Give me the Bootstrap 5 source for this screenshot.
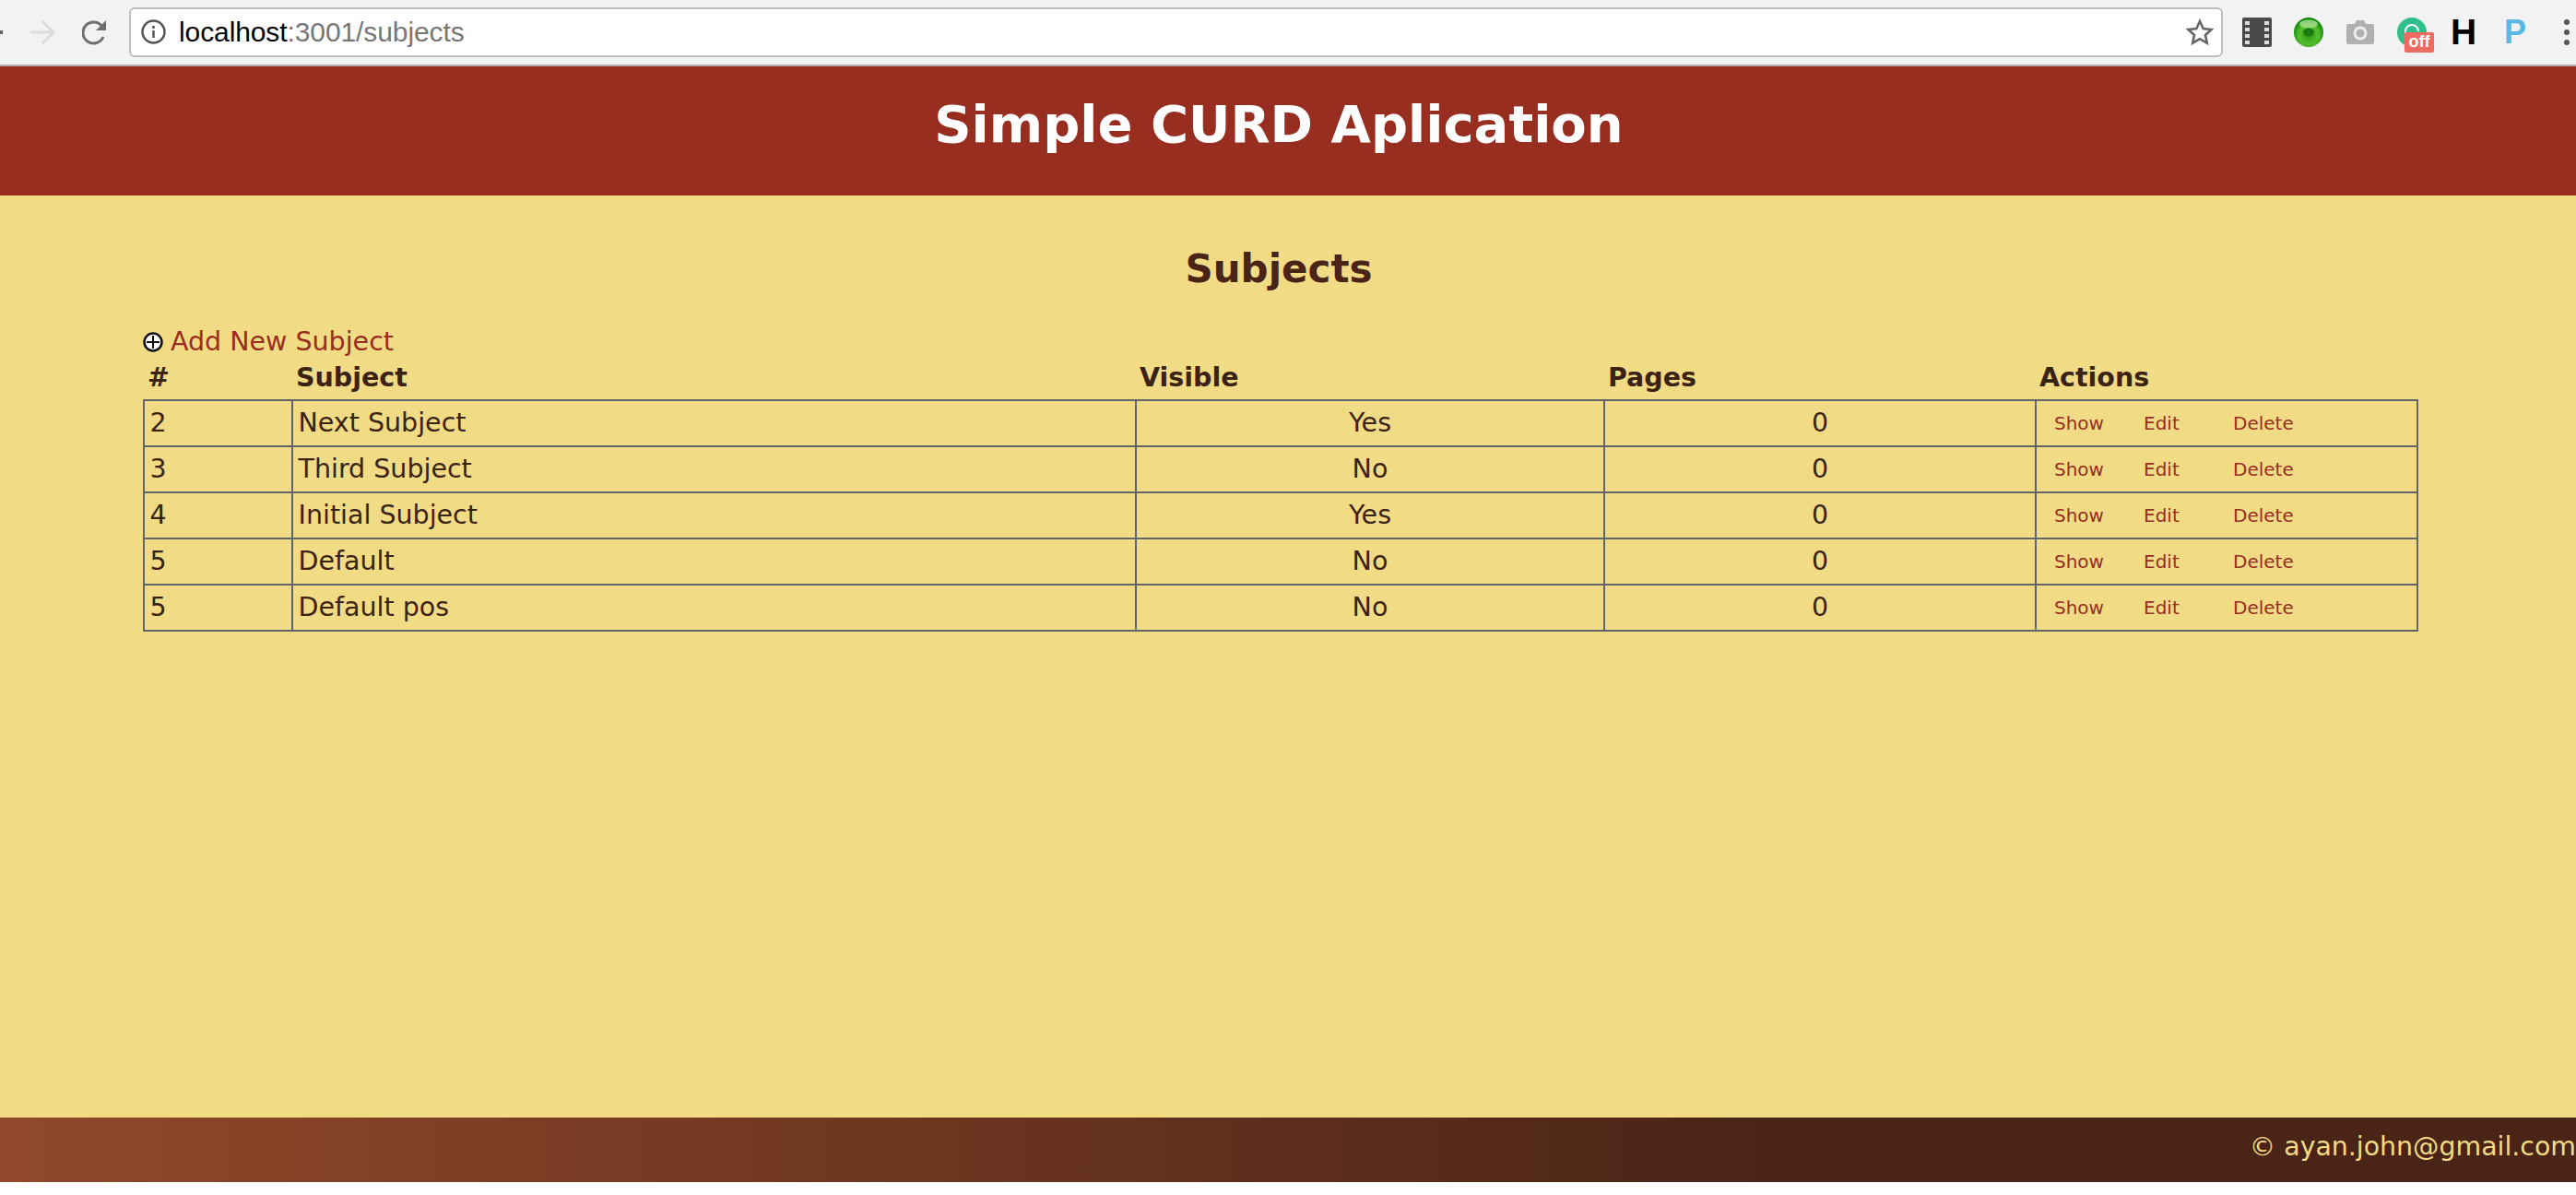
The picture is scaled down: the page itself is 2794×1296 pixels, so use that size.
<!DOCTYPE html>
<html lang="en">
<head>
    <meta charset="UTF-8">
    <title>Simple CURD Aplication</title>
    <link rel="stylesheet" href="https://cdn.jsdelivr.net/npm/bootstrap@5.3.2/dist/css/bootstrap.min.css">
    <style>
        html, body { height: 100%; }
        body {
            background: #fff;
            font-family: "DejaVu Sans", Verdana, sans-serif;
            color: #3b2314;
            height: 1296px;
            overflow: hidden;
        }
        .chrome-bar {
            height: 72px;
            background: #f2f2f2;
            border-bottom: 2px solid #b5aca9;
            overflow: hidden;
        }
        .chrome-bar > * { flex-shrink: 0; }
        .back-tick { width: 3px; height: 4px; background: #666; margin-right: 30px; }
        .fwd-arrow { margin-right: 29px; }
        .url-box {
            width: 2271px;
            height: 54px;
            margin-left: 24px;
            background: #fff;
            border: 2px solid #bdbdbd;
            border-radius: 6px;
            padding: 0 8px 1px 11px;
            font-family: "Liberation Sans", Arial, sans-serif;
            font-size: 30px;
            letter-spacing: -0.1px;
            color: #000;
        }
        .url-box .url-rest { color: #777; }
        .info-ico { margin-right: 14px; }
        .ext-icons { padding-left: 9px; }
        .ext-slot { width: 56px; height: 36px; flex-shrink: 0; display: flex; justify-content: center; align-items: center; position: relative; }
        .off-tag {
            position: absolute;
            left: 20px;
            top: 18px;
            width: 32px;
            height: 22px;
            background: #ef6a5f;
            border-radius: 2px;
            color: #fff;
            font: 700 18px/21px "Liberation Sans", sans-serif;
            text-align: center;
        }
        .ext-h { font: 700 39px/36px "Liberation Sans", sans-serif; color: #000; }
        .ext-p { font: 700 36px/36px "Liberation Sans", sans-serif; color: #5ab8e4; }
        .app-head {
            height: 140px;
            background: #972e1f;
            color: #fff;
            padding: 0 20px 14px 0;
        }
        .app-head h1 { font-size: 56px; font-weight: 700; margin: 0; }
        .app-main {
            height: 1000px;
            background: #f2db85;
            padding: 55px 173px 0 155px;
        }
        .app-main h2 {
            font-size: 42px;
            font-weight: 700;
            color: #4a2416;
            text-align: center;
            margin: 0 0 38px 0;
            line-height: 50px;
            padding-right: 2px;
        }
        .add-row { height: 32px; font-size: 28.5px; line-height: 32px; gap: 8px; }
        .add-row a, .subject-grid a { color: #972e1f; text-decoration: none; }
        .subject-grid {
            width: 2466px;
            table-layout: fixed;
            border-collapse: collapse;
            font-size: 28.5px;
            color: #3b2314;
        }
        .subject-grid th { font-weight: 700; height: 47px; padding: 0 4px; line-height: 30px; }
        .subject-grid td {
            border: 2px solid #62666a;
            height: 50px;
            padding: 0 5.5px;
            line-height: 30px;
        }
        .subject-grid .mid-cell { text-align: center; }
        .act-link { font-size: 20px; display: inline-block; width: 97px; }
        .subject-grid td.act-cell { padding: 0 0 2px 19px; }
        .app-foot {
            height: 70px;
            background: linear-gradient(90deg, #91482b 0%, #4a2416 68.5%, #4a2416 100%);
            color: #f2db85;
            font-size: 28.4px;
            line-height: 64px;
            text-align: right;
            white-space: nowrap;
        }
    </style>
</head>
<body>
    <div class="chrome-bar d-flex align-items-center">
        <span class="back-tick"></span>
        <svg class="fwd-arrow" width="27" height="28" viewBox="0 0 27 28" fill="none" stroke="#dcdcdc" stroke-width="3"><path d="M0 14h25M13 2l12 12-12 12"/></svg>
        <svg width="27" height="28" viewBox="0 0 27 28" fill="none" stroke="#6f6f6f" stroke-width="3"><path d="M23 19a11.500 11.500 0 1 1-1-11"/><path d="M26 1v11H15z" fill="#6f6f6f" stroke="none"/></svg>
        <div class="url-box d-flex align-items-center">
            <svg class="info-ico" width="27" height="27" viewBox="0 0 27 27" fill="none" stroke="#555" stroke-width="2.500"><circle cx="13.500" cy="13.500" r="12"/><path d="M13.500 12v8M13.500 7v3"/></svg>
            <span>localhost<span class="url-rest">:3001/subjects</span></span>
            <svg class="ms-auto" width="30" height="30" viewBox="0 0 30 30" fill="none" stroke="#666" stroke-width="2.600"><path d="M15 3l3.700 8 8.800 1-6.500 6 1.800 8.600L15 22.200 7.200 26.600 9 18l-6.500-6 8.800-1z"/></svg>
        </div>
        <div class="ext-icons d-flex align-items-center">
            <div class="ext-slot"><svg width="32" height="32" viewBox="0 0 32 32"><rect width="32" height="32" rx="2" fill="#4a4a4a"/><g fill="#ddd"><rect x="3" y="4" width="5" height="4"/><rect x="3" y="11" width="5" height="4"/><rect x="3" y="18" width="5" height="4"/><rect x="3" y="25" width="5" height="4"/><rect x="24" y="4" width="5" height="4"/><rect x="24" y="11" width="5" height="4"/><rect x="24" y="18" width="5" height="4"/><rect x="24" y="25" width="5" height="4"/></g></svg></div>
            <div class="ext-slot"><svg width="32" height="32" viewBox="0 0 32 32"><defs><radialGradient id="greenBall" cx="50%" cy="60%" r="55%"><stop offset="0" stop-color="#2f9a18"/><stop offset="0.6" stop-color="#55bf2c"/><stop offset="1" stop-color="#0f8a0c"/></radialGradient></defs><circle cx="16" cy="16" r="16" fill="url(#greenBall)"/><ellipse cx="16" cy="7" rx="10" ry="4.500" fill="#b8e6a0" opacity="0.7"/><ellipse cx="16" cy="16" rx="6" ry="4.500" fill="#1c7a12"/></svg></div>
            <div class="ext-slot"><svg width="30" height="26" viewBox="0 0 30 26"><path d="M2 4h7l2-4h8l2 4h7a2 2 0 0 1 2 2v18a2 2 0 0 1-2 2H2a2 2 0 0 1-2-2V6a2 2 0 0 1 2-2z" fill="#b0b0b0"/><circle cx="15" cy="14" r="6" fill="none" stroke="#eee" stroke-width="3"/></svg></div>
            <div class="ext-slot"><svg width="32" height="32" viewBox="0 0 32 32"><circle cx="16" cy="16" r="16" fill="#2fbf8b"/><path d="M9 26V15a7 7 0 0 1 14 0" fill="none" stroke="#fff" stroke-width="2"/></svg><span class="off-tag">off</span></div>
            <div class="ext-slot"><span class="ext-h">H</span></div>
            <div class="ext-slot"><span class="ext-p">P</span></div>
            <div class="ext-slot"><svg width="8" height="30" viewBox="0 0 8 30" fill="#555"><circle cx="4" cy="4" r="3"/><circle cx="4" cy="15" r="3"/><circle cx="4" cy="26" r="3"/></svg></div>
        </div>
    </div>

    <header class="app-head d-flex align-items-center justify-content-center">
        <h1>Simple CURD Aplication</h1>
    </header>

    <main class="app-main">
        <h2>Subjects</h2>
        <div class="add-row d-flex align-items-center">
            <svg width="22" height="22" viewBox="0 0 22 22"><circle cx="11" cy="11" r="9.500" fill="#fff" stroke="#111" stroke-width="2.500"/><path d="M4 11h14M11 4v14" stroke="#111" stroke-width="2"/></svg>
            <a href="#">Add New Subject</a>
        </div>
        <table class="subject-grid">
            <colgroup>
                <col style="width:161px"><col style="width:915px"><col style="width:508px"><col style="width:468px"><col style="width:414px">
            </colgroup>
            <thead>
                <tr><th>#</th><th>Subject</th><th>Visible</th><th>Pages</th><th>Actions</th></tr>
            </thead>
            <tbody>
                <tr><td>2</td><td>Next Subject</td><td class="mid-cell">Yes</td><td class="mid-cell">0</td><td class="act-cell"><a class="act-link" href="#">Show</a><a class="act-link" href="#">Edit</a><a class="act-link" href="#">Delete</a></td></tr>
                <tr><td>3</td><td>Third Subject</td><td class="mid-cell">No</td><td class="mid-cell">0</td><td class="act-cell"><a class="act-link" href="#">Show</a><a class="act-link" href="#">Edit</a><a class="act-link" href="#">Delete</a></td></tr>
                <tr><td>4</td><td>Initial Subject</td><td class="mid-cell">Yes</td><td class="mid-cell">0</td><td class="act-cell"><a class="act-link" href="#">Show</a><a class="act-link" href="#">Edit</a><a class="act-link" href="#">Delete</a></td></tr>
                <tr><td>5</td><td>Default</td><td class="mid-cell">No</td><td class="mid-cell">0</td><td class="act-cell"><a class="act-link" href="#">Show</a><a class="act-link" href="#">Edit</a><a class="act-link" href="#">Delete</a></td></tr>
                <tr><td>5</td><td>Default pos</td><td class="mid-cell">No</td><td class="mid-cell">0</td><td class="act-cell"><a class="act-link" href="#">Show</a><a class="act-link" href="#">Edit</a><a class="act-link" href="#">Delete</a></td></tr>
            </tbody>
        </table>
    </main>

    <footer class="app-foot">&copy; ayan.john@gmail.com</footer>

    <script src="https://cdn.jsdelivr.net/npm/bootstrap@5.3.2/dist/js/bootstrap.bundle.min.js"></script>
</body>
</html>
